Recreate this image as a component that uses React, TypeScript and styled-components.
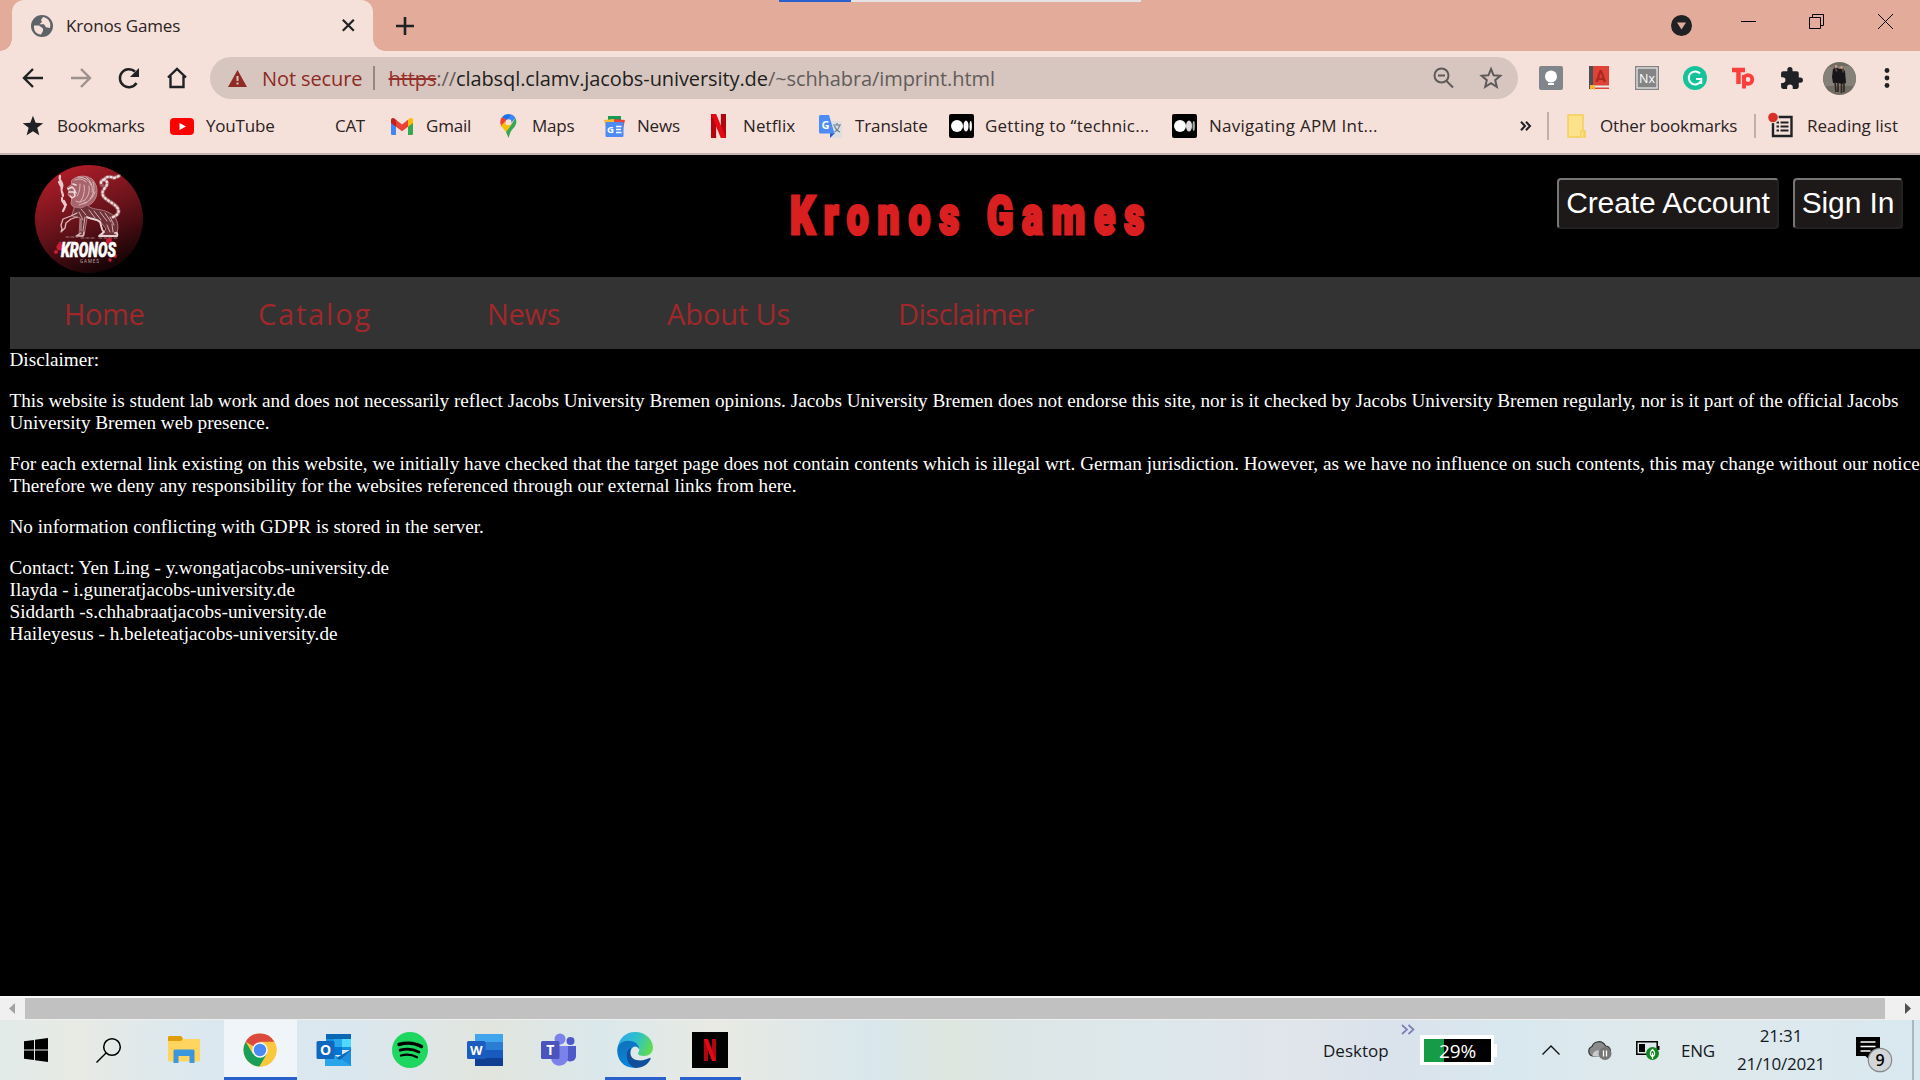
import React from "react";
import styled, { createGlobalStyle, css } from "styled-components";

const Global = createGlobalStyle`
  * { box-sizing: border-box; }
  html, body { margin: 0; padding: 0; background: #000; overflow: hidden; }
  svg { display: block; flex: none; overflow: visible; }
`;

const uiFont = css`
  font-family: "Open Sans", "Noto Sans", sans-serif;
  white-space: nowrap;
`;

const Screen = styled.div`
  width: 1920px;
  height: 1080px;
  display: flex;
  flex-direction: column;
  overflow: hidden;
  background: #000;
`;

/* ---------- Browser chrome ---------- */

const TabStrip = styled.div`
  flex: none;
  height: 51px;
  display: flex;
  padding-left: 12px;
  background: #e3ab99;
  position: relative;
`;

const Tab = styled.div`
  width: 361px;
  height: 51px;
  display: flex;
  align-items: center;
  padding: 0 18px 0 19px;
  background: #f5e0da;
  border-radius: 12px 12px 0 0;
  position: relative;
  &::before,
  &::after {
    content: "";
    position: absolute;
    bottom: 0;
    width: 12px;
    height: 12px;
  }
  &::before {
    left: -12px;
    background: radial-gradient(circle at 0 0, transparent 11.5px, #f5e0da 12px);
  }
  &::after {
    right: -12px;
    background: radial-gradient(circle at 100% 0, transparent 11.5px, #f5e0da 12px);
  }
`;

const TabTitle = styled.span`
  ${uiFont}
  flex: 1;
  margin-left: 13px;
  font-size: 17px;
  letter-spacing: -0.15px;
  color: #2b2322;
`;

const NewTab = styled.div`
  display: flex;
  align-items: center;
  margin-left: 23px;
`;

const LoadStrip = styled.div`
  position: absolute;
  left: 779px;
  top: 0;
  width: 362px;
  height: 2px;
  background: linear-gradient(90deg, #2a60cc 72px, #e4e2e2 72px);
`;

const WindowControls = styled.div`
  margin-left: auto;
  display: flex;
  padding: 0 27px 0 0;
  align-items: flex-start;
`;

const Control = styled.div<{ $w: number; $top: number }>`
  width: ${(p) => p.$w}px;
  padding-top: ${(p) => p.$top}px;
  display: flex;
  justify-content: flex-end;
`;

const Toolbar = styled.div`
  flex: none;
  height: 54px;
  display: flex;
  align-items: center;
  padding-left: 21px;
  background: #f5e0da;
`;

const NavButtons = styled.div`
  flex: none;
  display: flex;
  width: 189px;
  gap: 24px;
`;

const Omnibox = styled.div`
  flex: none;
  width: 1308px;
  height: 42px;
  display: flex;
  align-items: center;
  padding: 0 15px 0 18px;
  border-radius: 21px;
  background: #d7c6bf;
`;

const NotSecure = styled.span`
  ${uiFont}
  width: 111px;
  margin-left: 15px;
  font-size: 20px;
  letter-spacing: -0.1px;
  color: #8f2a24;
`;

const Divider = styled.i<{ $h: number; $c: string }>`
  width: 1.5px;
  height: ${(p) => p.$h}px;
  background: ${(p) => p.$c};
`;

const Address = styled.span`
  ${uiFont}
  flex: 1;
  margin-left: 14px;
  font-size: 20px;
  letter-spacing: -0.09px;
  color: #635c5a;
  s { color: #96302a; }
  b { font-weight: 400; color: #221e1d; }
`;

const OmniIcons = styled.div`
  display: flex;
  gap: 24px;
`;

const Extensions = styled.div`
  flex: none;
  display: flex;
  align-items: center;
  margin-left: 9px;
`;

const ExtSlot = styled.div`
  width: 48px;
  height: 34px;
  display: flex;
  align-items: center;
  justify-content: center;
`;

const BookmarkBar = styled.div`
  flex: none;
  height: 50px;
  display: flex;
  align-items: flex-start;
  background: #f5e0da;
  border-bottom: 2px solid #c4b3ae;
  padding-left: 21px;
`;

const Bookmark = styled.div<{ $w: number }>`
  width: ${(p) => p.$w}px;
  height: 42px;
  flex: none;
  display: flex;
  align-items: center;
`;

const BookmarkIcon = styled.div<{ $w: number }>`
  width: ${(p) => p.$w}px;
  flex: none;
`;

const BookmarkLabel = styled.span<{ $ls?: number }>`
  ${uiFont}
  font-size: 17px;
  letter-spacing: ${(p) => p.$ls ?? -0.2}px;
  color: #2b2322;
  padding-bottom: 2px;
`;

/* ---------- Site ---------- */

const Page = styled.main`
  flex: none;
  height: 841px;
  background: #000;
  padding-left: 10px;
  overflow: hidden;
`;

const SiteHeader = styled.header`
  height: 122px;
  display: flex;
  align-items: flex-start;
  padding: 10px 17px 0 25px;
`;

const SiteTitle = styled.h1`
  margin: 18px 0 0 647px;
  width: 355px;
  font: 900 53px/66px Roboto, "Open Sans", sans-serif;
  letter-spacing: 12.2px;
  white-space: nowrap;
  color: #d91f1f;
  -webkit-text-stroke: 3.2px #d91f1f;
  transform: scaleX(0.733);
  transform-origin: left center;
`;

const AccountButtons = styled.div`
  margin: 13px 0 0 auto;
  display: flex;
  gap: 14px;
`;

const SiteButton = styled.button<{ $w: number }>`
  width: ${(p) => p.$w}px;
  height: 51px;
  padding: 0 0 2px;
  font: 30px "Liberation Sans", Arial, sans-serif;
  letter-spacing: -0.1px;
  white-space: nowrap;
  color: #fff;
  background: #1d1918;
  border: 2px solid;
  border-color: #767676 #212121 #212121 #767676;
  border-radius: 4px;
`;

const SiteNav = styled.nav`
  height: 72px;
  display: flex;
  padding-left: 54px;
  background: #333;
`;

const NavLink = styled.a<{ $w: number; $ls: number }>`
  ${uiFont}
  width: ${(p) => p.$w}px;
  flex: none;
  font-size: 29px;
  line-height: 74px;
  letter-spacing: ${(p) => p.$ls}px;
  color: #a0282b;
`;

const Article = styled.article`
  width: 1912px;
  font: 19.2px/22px "Liberation Serif", "Times New Roman", serif;
  color: #fff;
  white-space: nowrap;
  margin-left: -0.5px;
  p { margin: 0 0 19px; }
`;

const ScrollBar = styled.div`
  flex: none;
  height: 24px;
  display: flex;
  align-items: flex-start;
  padding: 0 9px;
  background: #f0f0f0;
  border-top: 2px solid #f8f8f8;
  svg { margin-top: 5px; }
`;

const Thumb = styled.div`
  width: 1860px;
  height: 21px;
  margin: 0 auto 0 10px;
  background: #c1c1c1;
`;

/* ---------- Taskbar ---------- */

const Taskbar = styled.footer`
  flex: none;
  height: 60px;
  display: flex;
  background: linear-gradient(
    90deg,
    #e2ebe9 0,
    #e8eae4 80px,
    #dbe8ef 190px,
    #dbe7ee 360px,
    #e2e5de 490px,
    #dae8eb 600px,
    #e9eae3 715px,
    #e4e9e6 760px,
    #d9e7ed 870px,
    #dde6df 945px,
    #dce6e6 1010px,
    #dde8ec 1160px,
    #e0e5ea 1300px,
    #dae2ec 1380px,
    #d9e8ef 1520px,
    #dfe9eb 1660px,
    #d9e8f0 1920px
  );
`;

const Launchers = styled.div`
  display: flex;
`;

const Launcher = styled.div<{ $w: number; $on?: boolean; $line?: boolean; $nudge?: number }>`
  width: ${(p) => p.$w}px;
  height: 60px;
  display: flex;
  align-items: center;
  justify-content: center;
  padding-right: ${(p) => p.$nudge ?? 0}px;
  background: ${(p) => (p.$on ? "#f0f5f9" : "transparent")};
  box-shadow: ${(p) => (p.$line ? "inset 0 -3px 0 #2a60cc" : "none")};
`;

const Gap = styled.span<{ $w: number }>`
  width: ${(p) => p.$w}px;
  flex: none;
`;

const Tray = styled.div`
  margin-left: auto;
  display: flex;
  align-items: center;
`;

const TrayText = styled.span<{ $w: number; $ls: number }>`
  ${uiFont}
  width: ${(p) => p.$w}px;
  flex: none;
  font-size: 17px;
  letter-spacing: ${(p) => p.$ls}px;
  color: #15191c;
`;

const Clock = styled.div`
  ${uiFont}
  width: 130px;
  text-align: center;
  font-size: 17px;
  line-height: 28px;
  letter-spacing: -0.2px;
  color: #15191c;
`;

const BatteryMeter = styled.div`
  ${uiFont}
  width: 74px;
  height: 30px;
  border: 4px solid #fff;
  border-width: 4px 3px 3px 4px;
  background: linear-gradient(90deg, #169b46 20px, #000 20px);
  font-size: 19px;
  line-height: 25px;
  letter-spacing: -0.1px;
  text-align: center;
  color: #fff;
`;

const BatteryNub = styled.i`
  width: 3px;
  height: 13px;
  background: #fff;
`;

const TopAligned = styled.div<{ $w: number }>`
  width: ${(p) => p.$w}px;
  height: 60px;
  padding-top: 5px;
`;

const Peek = styled.i`
  width: 2px;
  height: 60px;
  background: #aab7bd;
`;

/* ---------- Drawings ---------- */

const Globe = () => (
  <svg width="22" height="22" viewBox="0 0 22 22">
    <circle cx="11" cy="11" r="11" fill="#5f6368" />
    <path d="M3 10.500h5l4 3v2.500l-2 3.500C5.500 19.500 2.500 16 3 10.500zM12 2l-2 3 1 2-2.500 2.200H13l2 3 4 .8c1.500-6-2-10-7-11z" fill="#f5e0da" />
  </svg>
);

const Stroke = ({ d, c = "#202124", w = 2.4 }: { d: string; c?: string; w?: number }) => (
  <svg width="24" height="24" viewBox="0 0 24 24" fill="none" stroke={c} strokeWidth={w}>
    <path d={d} />
  </svg>
);

const MediumLogo = ({ soft }: { soft?: boolean }) => (
  <svg width="25" height="24" viewBox="0 0 25 24">
    <rect width="25" height="24" rx="2" fill="#000" />
    <circle cx="8" cy="12" r="6" fill="#fff" />
    <ellipse cx="17" cy="12" rx={soft ? 3 : 2.5} ry="5.500" fill={soft ? "#ddd" : "#fff"} />
    <ellipse cx="21.700" cy="12" rx="1.200" ry="5" fill={soft ? "#aaa" : "#fff"} />
  </svg>
);

const NetflixN = ({ w, h }: { w: number; h: number }) => (
  <svg width={w} height={h} viewBox="0 0 14 24" preserveAspectRatio="none">
    <path d="M0 0h4.800v24H0zM9.200 0H14v24H9.200z" fill="#b1060f" />
    <path d="M0 0h4.800L14 24H9.200z" fill="#e50914" />
  </svg>
);

const tail = "M78 52c8-3 7-9-1-14-8-5-12-8-8-14 3-4 5-6 1-9-4-1-5 3-3 5M69 15c3-5 7-3 10-2l5-2";

const Lion = () => (
  <svg width="108" height="108" viewBox="0 0 108 108">
    <defs>
      <linearGradient id="crest" x1="0.300" y1="0" x2="0.720" y2="1">
        <stop offset="0" stopColor="#b01d28" />
        <stop offset="0.500" stopColor="#65121a" />
        <stop offset="1" stopColor="#0c0203" />
      </linearGradient>
    </defs>
    <circle cx="54" cy="54" r="54" fill="url(#crest)" />
    <g fill="none" stroke="#dcbabc" strokeLinecap="round" strokeLinejoin="round">
      <path d="M37 15c6-5 14-5 20-1 5 5 6 12 4 18-2 5-5 8-10 9-6 4-12 3-15-2l1-7-4-2 1-4-2-3 4-3z" fill="#a8636b" stroke="#c08a90" strokeWidth="1" />
      <path d="M40 15c4-2 8-1 11 2M43 12c6 0 11 3 13 8M52 13c4 3 6 8 5 14M58 17c2 6 1 12-3 17M54 21c1 6-1 11-5 15M49 20c1 6 0 12-4 17M45 19c0 6-1 9-3 12M60 27c-2 6-6 9-11 12M41 36c3 2 6 1 8-1M44 40l8-3" strokeWidth="1" />
      <path d="M33 24l4-2 2 2M34 27l5 0 1 4-3 2-2-2M38 19l3 1M39 24l2 4" strokeWidth="1.500" stroke="#f0dcdc" />
      <path d="M40 42c5 2 9 0 12-2 4 4 9 4 14 5 6 1 12 4 15 9 3 6 2 12 0 16l-7 2-8-3 5-5-6-8-13-3-3 18-5 0 1-18-8-2z" fill="#6e3138" stroke="#b07a80" strokeWidth="1" />
      <path d="M54 45l6 8M59 46l7 9M65 47l7 9M70 48l6 9M75 52l4 8M46 44l5 6M44 47l4 8M50 52l-2 14M46 54l0 12M72 60l3 7M77 59l1 8" strokeWidth="0.900" />
      <path d="M52 52c5 3 9 1 13 5 2 5 1 8 4 10l-5 4 8 0M80 68c2-1 3 1 2 3l-12 0" strokeWidth="1.900" stroke="#e9d3d4" />
      <path d="M42 48l-6 3-8 3-2 6 1 4-1 3M42 52l-6 2-5 4-1 5-3 3M46 68l-5 3 7 0 1-4" strokeWidth="1.300" />
      <path d={tail} strokeWidth="4" stroke="#9d5961" />
      <path d={tail} strokeWidth="2.400" strokeDasharray="1.200 2.600" stroke="#ecd8d8" />
      <path d="M25 11c-2 5 4 6 2 11-2 4 1 5 1 9M27 33c-1 5 4 5 3 9l-2 4M24 17l3 6M29 36l2 4" strokeWidth="2.200" stroke="#e5cacb" />
      <path d="M31 72h12M46 73h14M64 73h18" strokeWidth="0.900" strokeDasharray="3 2" stroke="#a98084" />
    </g>
    <g fill="#ce1c34">
      <circle cx="25" cy="82" r="3.500" /><circle cx="21" cy="87" r="2" /><circle cx="74" cy="76" r="3" />
      <circle cx="80" cy="91" r="2" /><circle cx="75" cy="95" r="1.700" /><circle cx="25" cy="78" r="1.500" />
    </g>
    <text x="26" y="91.500" textLength="55" lengthAdjust="spacingAndGlyphs" fill="#fff" stroke="#fff" strokeWidth="0.600" fontFamily="Roboto, sans-serif" fontWeight="900" fontStyle="italic" fontSize="21">KRONOS</text>
    <text x="45" y="98" textLength="19" fill="#b9a3a5" fontFamily="Roboto, sans-serif" fontSize="4.500">GAMES</text>
  </svg>
);

const Chrome = () => (
  <svg width="34" height="34" viewBox="0 0 34 34">
    <circle cx="17" cy="17" r="16.500" fill="#fbc83c" />
    <path d="M17 17L2.700 8.700A16.500 16.500 0 0 1 31.300 8.700z" fill="#dc4a3d" />
    <path d="M2.700 8.700A16.500 16.500 0 0 0 16.500 33.500L24 21 17 17 10 21z" fill="#1a9f5b" />
    <path d="M17 8.700h14.300A16.500 16.500 0 0 1 16.500 33.500L24 21z" fill="#fbc83c" />
    <circle cx="17" cy="17" r="7.800" fill="#f4f6f8" />
    <circle cx="17" cy="17" r="6.200" fill="#4a8af4" />
  </svg>
);

const Edge = () => (
  <svg width="36" height="36" viewBox="0 0 36 36">
    <defs>
      <linearGradient id="edgeTop" x1="0" y1="0.300" x2="1" y2="0.600">
        <stop offset="0" stopColor="#2fa9ea" /><stop offset="0.500" stopColor="#2fc2c9" /><stop offset="1" stopColor="#62dc4c" />
      </linearGradient>
      <linearGradient id="edgeSide" x1="0" y1="0" x2="0.400" y2="1">
        <stop offset="0" stopColor="#0f6fb8" /><stop offset="1" stopColor="#0a86dc" />
      </linearGradient>
    </defs>
    <path d="M0.500 16C2 6 9 0 18 0c11 0 18 8 18 15.500 0 5-4 8.500-9 8.500-4 0-6-1.200-6-2.500 0-1 1.300-1.600 1.300-4 0-3-4-6.500-9.500-6.500C6 11 2 13 0.500 16z" fill="url(#edgeTop)" />
    <path d="M0.200 18C0.500 12 5.500 8.700 11.500 8.700c6.500 0 10.800 4 10.800 8.800-1.500-3-4-3.700-6-2.500-5 3-4 16 6 19.500C10 39 0 30 0.200 18z" fill="url(#edgeSide)" />
    <path d="M14.500 15.500c-3 5-1 12 6.500 12.800 5 .5 9-1 11.500-2.300 1-.4 1.500.4 1 1.200C31 32 26 36 18.500 36 11 34 9 26 10 21c.6-2.500 2.200-4.500 4.500-5.500z" fill="#124f9a" />
  </svg>
);

const Outlook = () => (
  <svg width="36" height="34" viewBox="0 0 36 34">
    <path d="M10 1h25v16H10z" fill="#1490df" /><path d="M10 1h25v5H10z" fill="#0a67b4" />
    <path d="M18 6h8v8h-8z" fill="#28a8ea" /><path d="M26 6h9v8h-9z" fill="#50d9ff" /><path d="M18 14h8v8h-8z" fill="#0078d4" />
    <path d="M9 16l14 9 12-9v17H9z" fill="#1a8fe0" /><path d="M9 16l27 17H9z" fill="#2ba5ea" /><path d="M36 16L20 25l4 2z" fill="#1168b4" />
    <rect x="0.500" y="8" width="18" height="18" rx="1.500" fill="#0f68bd" />
    <text x="9.500" y="22.200" textAnchor="middle" fontFamily="Open Sans, sans-serif" fontWeight="700" fontSize="14" fill="#fff">O</text>
  </svg>
);

const Word = () => (
  <svg width="36" height="34" viewBox="0 0 36 34">
    <path d="M8 1h28v8H8z" fill="#41a5ee" /><path d="M8 9h28v8H8z" fill="#2b7cd3" /><path d="M8 17h28v8H8z" fill="#185abd" /><path d="M8 25h28v8H8z" fill="#103f91" />
    <rect x="0" y="8" width="18.500" height="18" rx="1.500" fill="#1b5cbe" />
    <text x="9.200" y="22" textAnchor="middle" fontFamily="Open Sans, sans-serif" fontWeight="700" fontSize="13" fill="#fff">W</text>
  </svg>
);

const Teams = () => (
  <svg width="36" height="34" viewBox="0 0 36 34">
    <circle cx="29.500" cy="8" r="4" fill="#5059c9" /><path d="M24 13h11v10c0 6-8 7-11 3z" fill="#5059c9" />
    <circle cx="19" cy="6" r="5.500" fill="#7b83eb" /><path d="M10 13h17v11c0 11-17 12-17 0z" fill="#7b83eb" />
    <rect x="0" y="8" width="18.500" height="18" rx="1.500" fill="#4b53bc" />
    <text x="9.200" y="22" textAnchor="middle" fontFamily="Open Sans, sans-serif" fontWeight="700" fontSize="14" fill="#fff">T</text>
  </svg>
);

const Spotify = () => (
  <svg width="36" height="36" viewBox="0 0 36 36">
    <circle cx="18" cy="18" r="18" fill="#1ed760" />
    <g fill="none" stroke="#000" strokeLinecap="round">
      <path d="M7 12.500c8-2.300 16-1.500 22.500 2" strokeWidth="3.400" />
      <path d="M8 18.200c7-2 13.500-1.200 19 1.900" strokeWidth="2.800" />
      <path d="M9 23.500c6-1.500 11-1 16 1.800" strokeWidth="2.300" />
    </g>
  </svg>
);

const bookmarks: { w: number; iw: number; label: string; ls?: number; icon: React.ReactNode }[] = [
  { w: 149, iw: 36, label: "Bookmarks", icon: <svg width="23" height="22" viewBox="0 0 24 24"><path d="M12.500 .8l2.900 7.700 8.300.4-6.500 5.100 2.200 8.200-6.900-4.600-6.900 4.600L7.800 14 1.300 8.900l8.300-.4z" fill="#202124" /></svg> },
  { w: 129, iw: 36, label: "YouTube", icon: <svg width="24" height="17" viewBox="0 0 24 17"><rect width="24" height="17" rx="4" fill="#f00" /><path d="M9.500 5l6.500 3.500-6.500 3.500z" fill="#fff" /></svg> },
  { w: 92, iw: 36, label: "CAT", ls: -0.3, icon: null },
  { w: 108, iw: 35, label: "Gmail", icon: <svg width="22" height="17" viewBox="0 0 22 17"><path d="M0 3v12.500C0 16.500.7 17 1.500 17H5V8z" fill="#4285f4" /><path d="M22 3v12.500c0 1-.7 1.500-1.500 1.500H17V8z" fill="#34a853" /><path d="M17 1.800L19 .3c1.300-1 3 0 3 1.700v3l-5 3.700z" fill="#fbbc04" /><path d="M5 1.800L3 .3C1.700-.7 0 .3 0 2v3l5 3.700z" fill="#c5221f" /><path d="M5 1.800l6 4.600 6-4.600v6.900l-6 4.600-6-4.600z" fill="#ea4335" /></svg> },
  { w: 105, iw: 33, label: "Maps", icon: <svg width="17" height="24" viewBox="-1 0 17 24"><path d="M8.500 0A8.300 8.300 0 0 0 2 3l5 4 5.500-6z" fill="#1a73e8" /><path d="M2 3C-.5 6.500 0 10 2 13l6-6.500z" fill="#ea4335" /><path d="M11.500.6L7 6c2-1 5 2 3 4.500L15.500 4A8 8 0 0 0 11.500.6z" fill="#4285f4" /><path d="M2 13l4 5 6-9-5.500 2C5 10 5 8 6 6.500L1.200 11.500z" fill="#fbbc04" /><path d="M15.500 4c3 7-3 10-5 14l-2 6L6 18l5-7z" fill="#34a853" /><circle cx="8.500" cy="8.300" r="3" fill="#f5e0da" /></svg> },
  { w: 107, iw: 33, label: "News", icon: <svg width="21" height="21" viewBox="0 0 21 21"><path d="M4 0h13v6H4z" fill="#159b56" /><path d="M0 4l10-1v8H2z" fill="#f9bb2d" /><path d="M10 3l11 1-2 9h-9z" fill="#ea4335" /><rect x="1.500" y="6" width="18" height="15" rx="1" fill="#4c8bf5" /><text x="3" y="17" fontFamily="Open Sans, sans-serif" fontWeight="700" fontSize="9.500" fill="#fff">G</text><path d="M12 10.500h5.500M12 13.500h5M12 16.500h5.500" stroke="#fff" strokeWidth="1.500" /></svg> },
  { w: 108, iw: 32, label: "Netflix", ls: 0.1, icon: <NetflixN w={15} h={24} /> },
  { w: 130, iw: 36, label: "Translate", ls: -0.1, icon: <svg width="23" height="23" viewBox="0 0 23 23"><path d="M8 6h15v17H12z" fill="#dedfe1" /><path d="M11 23l5-5h-5z" fill="#2b56c6" /><path d="M0 1.500C0 .7.700 0 1.500 0H10l5.500 18.500H1.500A1.500 1.500 0 0 1 0 17z" fill="#4d8cf5" /><text x="2.500" y="13.500" fontFamily="Open Sans, sans-serif" fontWeight="700" fontSize="11" fill="#fff">G</text><path d="M14 10h8M18 8v2M20.500 10c-.5 4-3 6-5 7M15.500 11c1 3 3 5 5.500 6" stroke="#657f8c" fill="none" strokeWidth="1.200" /></svg> },
  { w: 223, iw: 36, label: "Getting to “technic...", ls: 0.22, icon: <MediumLogo /> },
  { w: 347, iw: 37, label: "Navigating APM Int...", ls: 0.25, icon: <MediumLogo soft /> },
];

const BrowserChrome = () => (
  <>
    <TabStrip>
      <LoadStrip />
      <Tab>
        <Globe />
        <TabTitle>Kronos Games</TabTitle>
        <svg width="13" height="13" viewBox="0 0 13 13"><path d="M.8.8l11 11M11.800.8l-11 11" stroke="#202124" strokeWidth="2.200" /></svg>
      </Tab>
      <NewTab>
        <svg width="18" height="18" viewBox="0 0 18 18"><path d="M9 0v18M0 9h18" stroke="#202124" strokeWidth="2.600" /></svg>
      </NewTab>
      <WindowControls>
        <Control $w={60} $top={15}>
          <svg width="21" height="21" viewBox="0 0 21 21"><circle cx="10.500" cy="10.500" r="10.500" fill="#202124" /><path d="M6 7.500h9l-4.500 7z" fill="#e3ab99" /></svg>
        </Control>
        <Control $w={64} $top={21}>
          <svg width="15" height="2"><path d="M0 .5h15" stroke="#000" /></svg>
        </Control>
        <Control $w={68} $top={14}>
          <svg width="15" height="15" viewBox="0 0 15 15" fill="none" stroke="#000"><path d="M.5 3.500h11v11H.5zM3.500 3.500v-3h11v11h-3" /></svg>
        </Control>
        <Control $w={69} $top={14}>
          <svg width="15" height="15" viewBox="0 0 15 15"><path d="M0 0l15 15M15 0L0 15" stroke="#000" /></svg>
        </Control>
      </WindowControls>
    </TabStrip>
    <Toolbar>
      <NavButtons>
        <Stroke d="M22 12H3.500M12 3l-9 9 9 9" />
        <Stroke d="M2 12h18.500M12 3l9 9-9 9" c="#9d908d" />
        <svg width="24" height="24" viewBox="0 0 24 24"><path d="M19.500 17A9 9 0 1 1 18 5.500" fill="none" stroke="#202124" strokeWidth="2.500" /><path d="M22 2v9h-9z" fill="#202124" /></svg>
        <Stroke d="M3 11.500L12 3l9 8.500M5.500 10v11h13V10" />
      </NavButtons>
      <Omnibox>
        <svg width="19" height="17" viewBox="0 0 19 17"><path d="M9.500 0L19 17H0z" fill="#8f2a24" /><path d="M9.500 6v5M9.500 12.500v2" stroke="#d7c6bf" strokeWidth="2" /></svg>
        <NotSecure>Not secure</NotSecure>
        <Divider $h={24} $c="#958784" />
        <Address><s>https</s>://<b>clabsql.clamv.jacobs-university.de</b>/~schhabra/imprint.html</Address>
        <OmniIcons>
          <svg width="23" height="24" viewBox="0 0 23 24" fill="none" stroke="#5f5a59" strokeWidth="2"><circle cx="9.500" cy="9.500" r="7" /><path d="M14.500 15l6.500 6.500M6 9.500h7" /></svg>
          <svg width="24" height="24" viewBox="0 0 24 24"><path d="M12 3l2.600 6.300 6.700.5-5.100 4.400 1.600 6.600-5.800-3.600-5.800 3.600 1.600-6.600-5.100-4.400 6.700-.5z" fill="none" stroke="#5f5a59" strokeWidth="2" /></svg>
        </OmniIcons>
      </Omnibox>
      <Extensions>
        <ExtSlot>
          <svg width="24" height="24" viewBox="0 0 24 24"><rect width="24" height="24" rx="2" fill="#80868b" /><circle cx="12" cy="10.500" r="6" fill="#fff" /><path d="M9 14h6v2H9zM9 17h6v2H9z" fill="#fff" /></svg>
        </ExtSlot>
        <ExtSlot>
          <svg width="22" height="24" viewBox="0 0 22 24"><path d="M1 0h20v23H1z" fill="#de4335" /><path d="M1 0h4v23H1z" fill="#4a4f55" /><path d="M5 19.500h16v2H5z" fill="#e8eef2" /><path d="M2 19h5v5l-2.500-1.500L2 24z" fill="#f4b731" /><text x="12.500" y="15.500" textAnchor="middle" fontFamily="Roboto, sans-serif" fontWeight="700" fontSize="16" fill="#ad2722">A</text></svg>
        </ExtSlot>
        <ExtSlot>
          <svg width="24" height="24" viewBox="0 0 24 24"><rect x=".5" y=".5" width="23" height="23" fill="#858585" stroke="#858585" /><rect x="2" y="2" width="20" height="20" fill="none" stroke="#eee" strokeWidth="1.200" /><text x="12" y="17" textAnchor="middle" fontFamily="Open Sans, sans-serif" fontSize="12.500" fill="#fff">Nx</text></svg>
        </ExtSlot>
        <ExtSlot>
          <svg width="24" height="24" viewBox="0 0 24 24"><circle cx="12" cy="12" r="12" fill="#15c39a" /><path d="M17 7.500a6.500 6.500 0 1 0 1 7.500M13 13h5.300v5" fill="none" stroke="#fff" strokeWidth="2" /></svg>
        </ExtSlot>
        <ExtSlot>
          <svg width="24" height="24" viewBox="0 0 24 24" fill="none" stroke="#fb3f3c"><path d="M1 4h13M7.500 4v14" strokeWidth="4.500" /><path d="M13 9v13.500" strokeWidth="4" /><circle cx="17" cy="13.500" r="4.300" strokeWidth="3.800" /></svg>
        </ExtSlot>
        <ExtSlot>
          <svg width="25" height="25" viewBox="0 0 24 24"><path d="M20.500 11H19V7a2 2 0 0 0-2-2h-4V3.500a2.500 2.500 0 0 0-5 0V5H4a2 2 0 0 0-2 2v3.800h1.500a2.700 2.700 0 0 1 0 5.400H2V20a2 2 0 0 0 2 2h3.800v-1.500a2.700 2.700 0 0 1 5.400 0V22H17a2 2 0 0 0 2-2v-4h1.500a2.500 2.500 0 0 0 0-5z" fill="#202124" /></svg>
        </ExtSlot>
        <ExtSlot>
          <svg width="33" height="33" viewBox="0 0 33 33"><circle cx="16.500" cy="16.500" r="16.500" fill="#706c64" /><path d="M5 5a16.500 16.500 0 0 0-3 19l29 0a16 16 0 0 0-4-20z" fill="#858178" /><path d="M10 7l3-2 3 2 3-1 3 3 1 12-4 1-4-1-5 0-1-6z" fill="#15151a" /><path d="M12 20l1 10M15 20v10M18.500 21v10M21 20v10" stroke="#2d2420" strokeWidth="1.600" /><path d="M11.800 4.500l2 5M19 5.500l1.500 5" stroke="#5b4238" strokeWidth="2" /><circle cx="13" cy="4.500" r="1.400" fill="#c79c89" /><circle cx="18.500" cy="5.500" r="1.400" fill="#c79c89" /></svg>
        </ExtSlot>
        <ExtSlot>
          <svg width="6" height="20" viewBox="0 0 6 20" fill="#202124"><circle cx="3" cy="2.500" r="2.400" /><circle cx="3" cy="10" r="2.400" /><circle cx="3" cy="17.500" r="2.400" /></svg>
        </ExtSlot>
      </Extensions>
    </Toolbar>
    <BookmarkBar>
      {bookmarks.map((b) => (
        <Bookmark key={b.label} $w={b.w}>
          <BookmarkIcon $w={b.iw}>{b.icon}</BookmarkIcon>
          <BookmarkLabel $ls={b.ls}>{b.label}</BookmarkLabel>
        </Bookmark>
      ))}
      <Bookmark $w={28}>
        <svg width="11" height="10" viewBox="-1 0 11 10" fill="none" stroke="#202124" strokeWidth="2"><path d="M1 .8L5 5 1 9.200M6 .8L10 5 6 9.200" /></svg>
      </Bookmark>
      <Bookmark $w={20}><Divider $h={28} $c="#c4aea8" /></Bookmark>
      <Bookmark $w={187}>
        <BookmarkIcon $w={33}>
          <svg width="19" height="24" viewBox="0 0 19 24"><path d="M1 1h15v16h2v6H1z" fill="#fde28c" stroke="#f3cf55" strokeWidth="1.500" /><path d="M14 23v-6h3v6" fill="#fde28c" stroke="#f3cf55" strokeWidth="1.200" /></svg>
        </BookmarkIcon>
        <BookmarkLabel $ls={-0.15}>Other bookmarks</BookmarkLabel>
      </Bookmark>
      <Bookmark $w={14}><Divider $h={24} $c="#c4aea8" /></Bookmark>
      <Bookmark $w={138}>
        <BookmarkIcon $w={39}>
          <svg width="25" height="24" viewBox="-1 0 25 24"><path d="M4 3h18.500v19H4z" fill="none" stroke="#202124" strokeWidth="2.400" /><path d="M7.500 8.500H10M7.500 12.500H10M7.500 16.500H10M11.500 8.500h8M11.500 12.500h8M11.500 16.500h8" stroke="#202124" strokeWidth="2" /><circle cx="4" cy="3.500" r="5.800" fill="#f5e0da" /><circle cx="4" cy="3.500" r="4.800" fill="#d93025" /></svg>
        </BookmarkIcon>
        <BookmarkLabel $ls={0}>Reading list</BookmarkLabel>
      </Bookmark>
    </BookmarkBar>
  </>
);

const Site = () => (
  <Page>
    <SiteHeader>
      <Lion />
      <SiteTitle>Kronos Games</SiteTitle>
      <AccountButtons>
        <SiteButton $w={222}>Create Account</SiteButton>
        <SiteButton $w={110}>Sign In</SiteButton>
      </AccountButtons>
    </SiteHeader>
    <SiteNav>
      <NavLink $w={194} $ls={-0.4}>Home</NavLink>
      <NavLink $w={229} $ls={1.8}>Catalog</NavLink>
      <NavLink $w={180} $ls={-0.3}>News</NavLink>
      <NavLink $w={231} $ls={-0.1}>About Us</NavLink>
      <NavLink $w={200} $ls={-0.6}>Disclaimer</NavLink>
    </SiteNav>
    <Article>
      <p>Disclaimer:</p>
      <p>This website is student lab work and does not necessarily reflect Jacobs University Bremen opinions. Jacobs University Bremen does not endorse this site, nor is it checked by Jacobs University Bremen regularly, nor is it part of the official Jacobs<br />University Bremen web presence.</p>
      <p>For each external link existing on this website, we initially have checked that the target page does not contain contents which is illegal wrt. German jurisdiction. However, as we have no influence on such contents, this may change without our notice.<br />Therefore we deny any responsibility for the websites referenced through our external links from here.</p>
      <p>No information conflicting with GDPR is stored in the server.</p>
      <p>Contact: Yen Ling - y.wongatjacobs-university.de<br />Ilayda - i.guneratjacobs-university.de<br />Siddarth -s.chhabraatjacobs-university.de<br />Haileyesus - h.beleteatjacobs-university.de</p>
    </Article>
  </Page>
);

const Desktop = () => (
  <Taskbar>
    <Launchers>
      <Launcher $w={72}><svg width="24" height="24" viewBox="0 0 24 24"><path d="M0 3.300l10-1.400v9.600H0zM11 1.800L24 0v11.500H11zM0 12.500h10v9.600L0 20.700zM11 12.500h13V24l-13-1.800z" /></svg></Launcher>
      <Launcher $w={72}><svg width="25" height="25" viewBox="0 0 25 25" fill="none" stroke="#000" strokeWidth="1.500"><circle cx="16" cy="9" r="8.300" /><path d="M10 15L.5 24.500" /></svg></Launcher>
      <Launcher $w={80}>
        <svg width="32" height="28" viewBox="0 0 32 28"><path d="M0 3h32v21c0 1-.5 1.500-1.500 1.500h-29C.5 25.500 0 25 0 24z" fill="#ffd55f" /><path d="M0 1.500C0 .5.500 0 1.500 0H13l2 2.500-2 2.500H0z" fill="#e09c0b" /><path d="M5.500 15c0-1 .5-1.500 1.500-1.500h18c1 0 1.500.5 1.500 1.500v12h-5v-7h-11v7h-5z" fill="#3a97dd" /></svg>
      </Launcher>
      <Launcher $w={73} $on $line $nudge={2}><Chrome /></Launcher>
      <Launcher $w={75} $nudge={1}><Outlook /></Launcher>
      <Launcher $w={76}><Spotify /></Launcher>
      <Launcher $w={74}><Word /></Launcher>
      <Launcher $w={75} $nudge={1}><Teams /></Launcher>
      <Gap $w={8} />
      <Launcher $w={61} $line $nudge={1}><Edge /></Launcher>
      <Gap $w={14} />
      <Launcher $w={61} $line $nudge={1}>
        <svg width="36" height="36" viewBox="0 0 36 36"><path d="M0 0h36v36H0z" /><path d="M12 7h4v22h-4zM20 7h4v22h-4z" fill="#b1060f" /><path d="M12 7h4l8 22h-4z" fill="#e50914" /></svg>
      </Launcher>
    </Launchers>
    <Tray>
      <TrayText $w={78} $ls={0}>Desktop</TrayText>
      <TopAligned $w={19}><svg width="14" height="9" viewBox="0 0 14 9" fill="none" stroke="#7c80b5" strokeWidth="1.700"><path d="M1 0l5 4.500L1 9M7.500 0l5 4.500-5 4.500" /></svg></TopAligned>
      <BatteryMeter>29%</BatteryMeter>
      <BatteryNub />
      <Gap $w={45} />
      <svg width="18" height="10" viewBox="0 0 18 10"><path d="M.5 9.500L9 1l8.500 8.500" fill="none" stroke="#111" strokeWidth="1.400" /></svg>
      <Gap $w={27} />
      <svg width="25" height="20" viewBox="0 0 25 20"><path d="M5.500 16a5 5 0 0 1-.5-9.500C7 1 15-.5 18.500 6c5 0 6.500 6 3 9.500z" fill="#8b8b8b" stroke="#333" strokeWidth="1.200" /><path d="M5.500 16c0-5 6-7 10-4l6 4z" fill="#c9cccc" /><circle cx="18" cy="13.500" r="6.500" fill="#767676" /><path d="M16.500 10.500v6M19.500 10.500v6" stroke="#fff" strokeWidth="1.300" /></svg>
      <Gap $w={24} />
      <svg width="24" height="20" viewBox="0 0 24 20"><path d="M.8 1.800h20.400v12.400H.8z" fill="none" stroke="#000" strokeWidth="1.500" /><path d="M3 4h6v8H3zM22 6h1.500v4H22z" /><circle cx="16.500" cy="13.500" r="6.500" fill="#12891f" /><path d="M16.500 9.500c3 3 3 5 0 7.500-3-2.500-3-4.500 0-7.500zM16.500 13v6" fill="none" stroke="#fff" strokeWidth="1.200" /></svg>
      <Gap $w={21} />
      <TrayText $w={35} $ls={-0.2}>ENG</TrayText>
      <Clock>21:31<br />21/10/2021</Clock>
      <Gap $w={10} />
      <svg width="37" height="44" viewBox="0 0 37 44"><path d="M0 9h24v19H15.500v6l-6-6H0z" /><path d="M4.500 14h15M4.500 18.500h15M4.500 23h10" stroke="#fff" strokeWidth="1.300" /><circle cx="24" cy="32" r="11.700" fill="#d2d6d8" stroke="#84898b" strokeWidth="1.200" /><text x="24" y="37.500" textAnchor="middle" fontFamily="Open Sans, sans-serif" fontWeight="600" fontSize="16" fill="#000">9</text></svg>
      <Gap $w={19} />
      <Peek />
      <Gap $w={6} />
    </Tray>
  </Taskbar>
);

export default function App() {
  return (
    <Screen>
      <Global />
      <BrowserChrome />
      <Site />
      <ScrollBar>
        <svg width="6" height="11" viewBox="0 0 6 11"><path d="M6 0v11L0 5.500z" fill="#a3a3a3" /></svg>
        <Thumb />
        <svg width="6" height="11" viewBox="0 0 6 11"><path d="M0 0v11l6-5.500z" fill="#505050" /></svg>
      </ScrollBar>
      <Desktop />
    </Screen>
  );
}
